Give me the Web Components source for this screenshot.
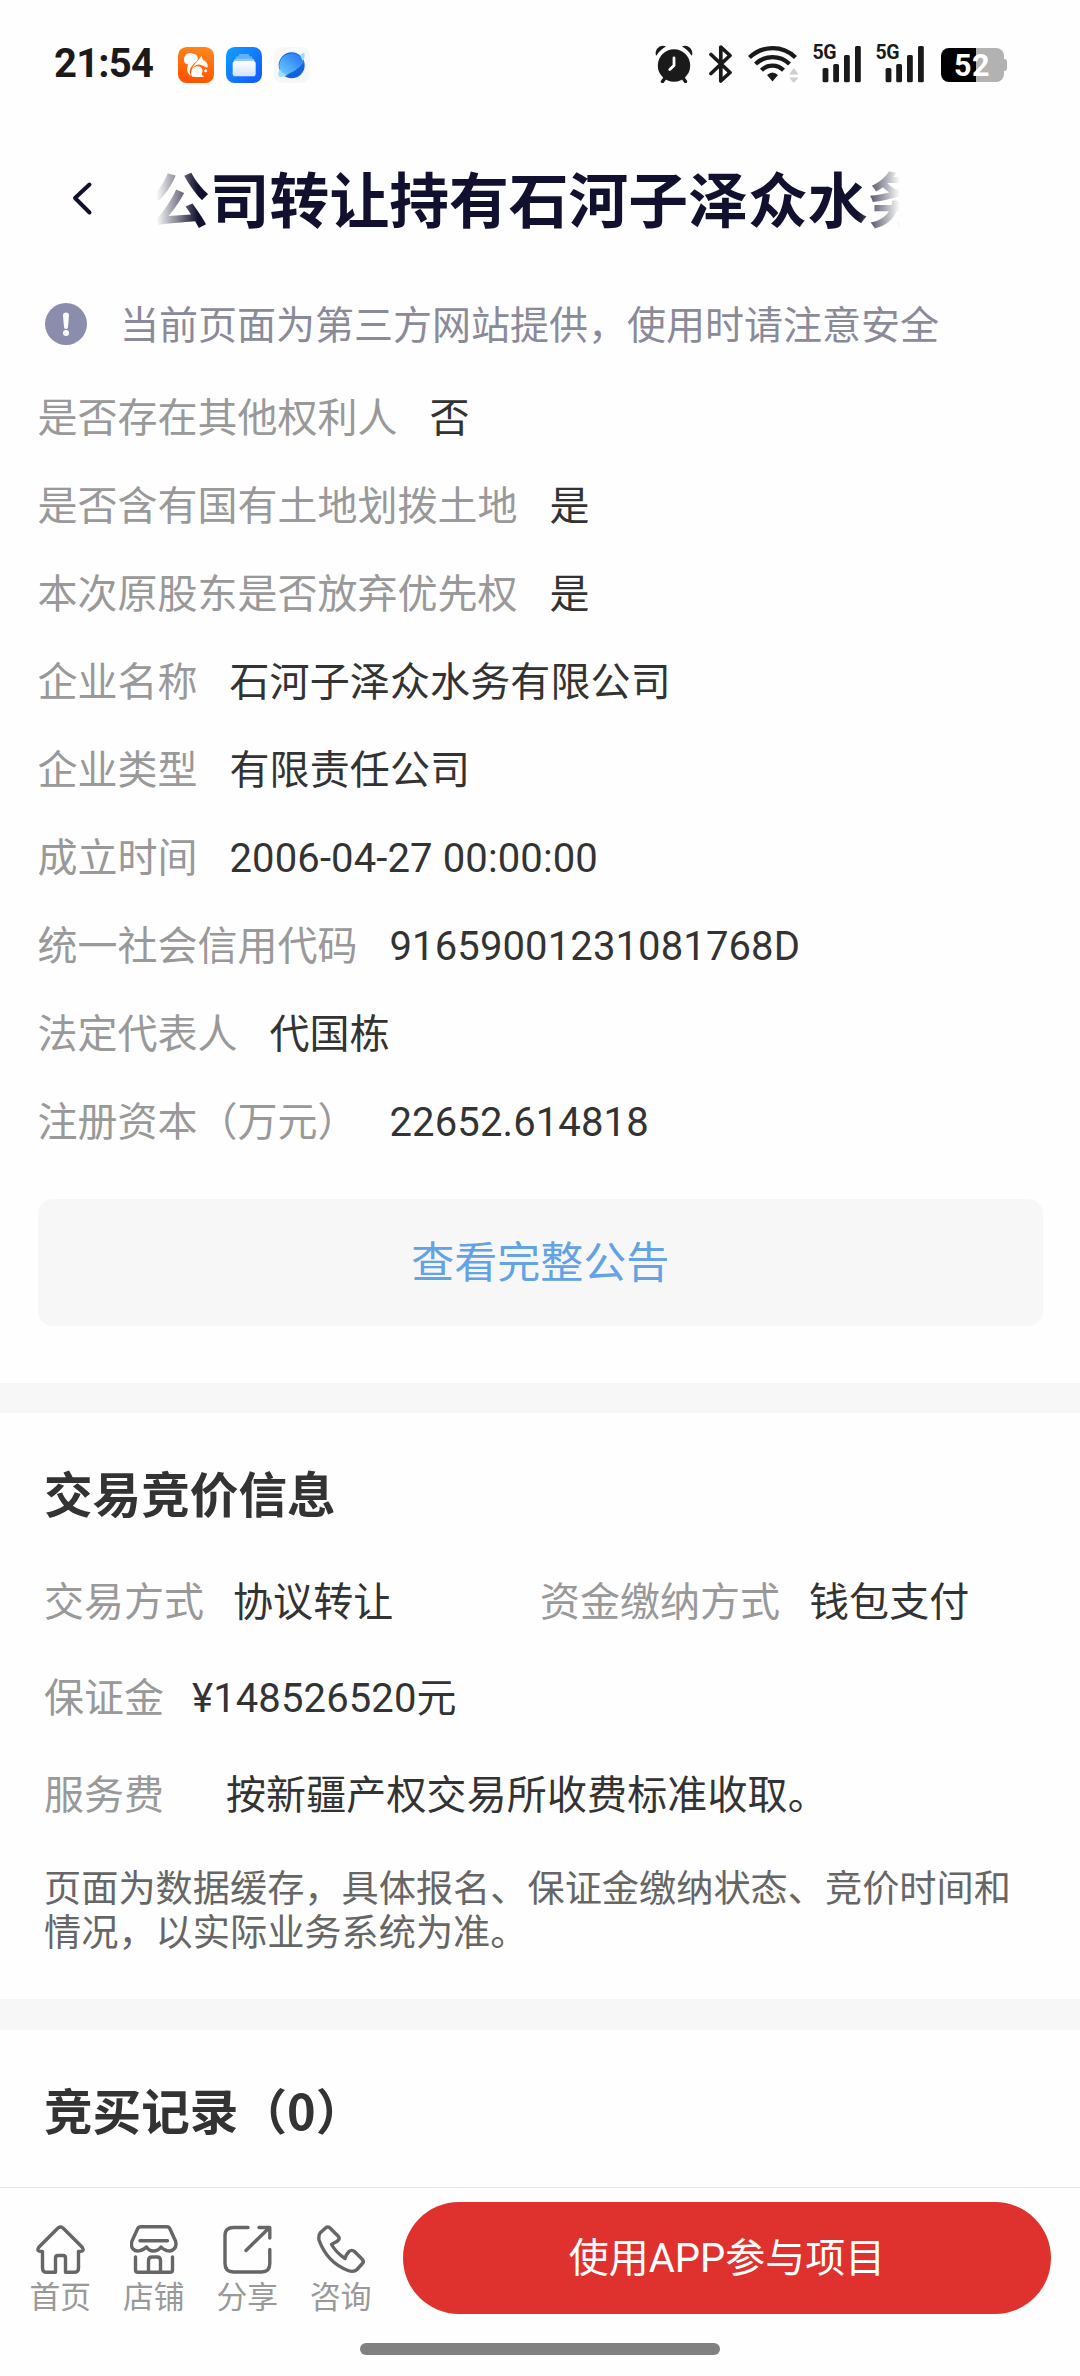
<!DOCTYPE html>
<html lang="zh-CN">
<head>
<meta charset="utf-8"/>
<title>公司转让持有石河子泽众水务</title>
<style>
body {
	margin: 0;
	width: 1080px;
	height: 2376px;
	overflow: hidden;
	display: flex;
	flex-direction: column;
	background: #fefefe;
	color: #333;
	font-family: Roboto, "Noto Sans CJK SC", sans-serif;
	font-size: 40px;
}
</style>
<script>

'use strict';

// every element is a shadow root filled from its own markup
const define = (name, html) => {
	const template = document.createElement('template');
	template.innerHTML = html;
	window.customElements.define(name, class extends HTMLElement {
		constructor() {
			super();
			const shadow = this.attachShadow({mode: 'open'});
			shadow.appendChild(template.content.cloneNode(true));
		}
	});
};

define('signal-bars', `
<style>
:host { display: block; position: relative; width: 48px; height: 38px; }
svg { display: block; }
span { position: absolute; left: 0; top: -3px; font: 700 19.5px/22px Roboto, sans-serif; letter-spacing: -0.4px; color: #1a1a1a; }
</style>
<svg width="48" height="38" fill="#1a1a1a">
	<rect x="9.6" y="23" width="5.8" height="14.3" rx="1.5"/>
	<rect x="20.2" y="19" width="5.8" height="18.3" rx="1.5"/>
	<rect x="31" y="10" width="5.8" height="27.3" rx="1.5"/>
	<rect x="42" y="1" width="5.8" height="36.3" rx="1.5"/>
</svg>
<span>5G</span>
`);

define('battery-level', `
<style>
:host { display: flex; align-items: center; height: 34px; }
.box {
	width: 63px; height: 34px; border-radius: 8px; color: #fff;
	background: linear-gradient(90deg, #000 55.5%, #b2b2b2 55.5%);
	font: 700 30.5px/35px Roboto, sans-serif; text-align: center; letter-spacing: 0.4px;
}
.nub { width: 3px; height: 12px; background: #b2b2b2; border-radius: 0 3px 3px 0; }
</style>
<div class="box"><slot></slot></div>
<div class="nub"></div>
`);

define('status-bar', `
<style>
:host { display: flex; flex: none; box-sizing: border-box; height: 128px; padding: 45px 73.500px 0 54px; }
.time { width: 124px; font: 700 40px/38px Roboto, sans-serif; color: #1a1a1a; letter-spacing: -0.8px; }
.apps { display: flex; gap: 12px; padding-top: 2px; }
.icons { display: flex; margin-left: auto; }
svg { display: block; }
</style>
<div class="time">21:54</div>
<div class="apps">
	<svg width="36" height="36" viewBox="0 0 108 108">
		<linearGradient id="o" x1="1" y1="0" x2="0.8" y2="1"><stop stop-color="#ff8a1f"/><stop offset="1" stop-color="#ff5500"/></linearGradient>
		<rect width="108" height="108" rx="26" fill="url(#o)"/>
		<g fill="#fff">
			<path d="M18 41C16 24 32 14 45 20C58 21 62 32 58 41C46 50 36 60 35 74C36 80 38 84 41 88C24 80 27 62 30 52C26 48 22 54 18 41Z"/>
			<path d="M41 70C42 56 60 44 70 26L75 39C85 42 91 52 89 60C84 64 79 57 71 55C58 49 48 56 41 70Z"/>
			<path d="M40 84C38 70 46 58 58 58C70 58 78 68 71 82C70 85 76 84 77 90H45Q41 88 40 84Z"/>
			<circle cx="83" cy="71" r="4.5"/>
		</g>
	</svg>
	<svg width="36" height="36" viewBox="0 0 108 108">
		<linearGradient id="b" x1="0" y1="0" x2="1" y2="1"><stop stop-color="#0fa0ff"/><stop offset="1" stop-color="#1456fa"/></linearGradient>
		<linearGradient id="w" x1="0" y1="0" x2="0" y2="1"><stop stop-color="#fff"/><stop offset="1" stop-color="#d4e2ff"/></linearGradient>
		<rect width="108" height="108" rx="26" fill="url(#b)"/>
		<rect x="38" y="21" width="32" height="10" rx="4" fill="#5fb2ff"/>
		<rect x="29" y="28" width="50" height="12" rx="4" fill="#5fb2ff"/>
		<rect x="24" y="35" width="61" height="14" rx="5" fill="#8fc8ff"/>
		<rect x="20" y="42" width="69" height="46" rx="8" fill="url(#w)"/>
	</svg>
	<svg width="36" height="36" viewBox="0 0 108 108">
		<linearGradient id="p" x1="0" y1="1" x2="1" y2="0"><stop stop-color="#6fd0ff"/><stop offset="1" stop-color="#1d6cf0"/></linearGradient>
		<rect width="108" height="108" rx="26" fill="#f7f7f8"/>
		<circle cx="53" cy="55" r="39" fill="#1461dd"/>
		<path d="M18 72A39 39 0 0 1 86 35Q90 40 91 45Q60 82 26 84Z" fill="url(#p)"/>
		<path d="M78 24Q90 14 92 20Q94 30 86 42ZM17 66Q8 86 18 90Q26 92 44 82Q26 84 17 66Z" fill="#9bdcff"/>
	</svg>
</div>
<div class="icons">
	<svg width="38" height="38" viewBox="0 0 38 38">
		<g fill="#1a1a1a">
			<circle cx="19" cy="20.5" r="16.2"/>
			<path d="M1 10.5C-1 4 6 -1.500 11 1.500C8 3 4 6 1.500 10.500ZM37 10.500C39 4 32 -1.500 27 1.500C30 3 34 6 36.500 10.500Z"/>
		</g>
		<path d="M10 33L7.500 36.500M28 33L30.500 36.500" stroke="#1a1a1a" stroke-width="3.4" stroke-linecap="round"/>
		<path d="M19 13V20.500L14.800 24.500" fill="none" stroke="#fff" stroke-width="2.8" stroke-linecap="round" stroke-linejoin="round"/>
	</svg>
	<svg style="margin-left:16px" width="24" height="38" viewBox="0 0 24 38" fill="none" stroke="#1a1a1a" stroke-width="3.7" stroke-linecap="round" stroke-linejoin="round">
		<path d="M2 9.500L21 27.500L11.800 36V2L21 10.500L2 28.500"/>
	</svg>
	<svg style="margin-left:15px" width="52" height="38" viewBox="0 0 52 38">
		<g fill="none" stroke="#1a1a1a" stroke-width="4.300">
			<path d="M1.500 12.500A33 33 0 0 1 47.500 12.500"/>
			<path d="M7.500 19A24.500 24.500 0 0 1 41.500 19"/>
			<path d="M13.500 25.300A15.500 15.500 0 0 1 35.500 25.300"/>
		</g>
		<path d="M19 30Q24.500 25 30 30L24.500 36.500Z" fill="#1a1a1a"/>
		<path d="M41 29.500L45.800 23L50.600 29.500ZM41 32.500H50.600L45.800 38Z" fill="#cfcfcf"/>
	</svg>
	<signal-bars style="margin-left:13px"></signal-bars>
	<signal-bars style="margin-left:15px"></signal-bars>
	<battery-level style="margin:3px 0 0 17px">52</battery-level>
</div>
`);

define('title-bar', `
<style>
:host { display: flex; flex: none; align-items: center; height: 144px; padding-left: 70px; color: #11112f; }
svg { flex: none; width: 86px; height: 40px; }
.clip {
	width: 744px; overflow: hidden; white-space: nowrap;
	-webkit-mask-image: linear-gradient(90deg, transparent, #000 42px, #000 702px, transparent);
	mask-image: linear-gradient(90deg, transparent, #000 42px, #000 702px, transparent);
}
.text { margin-left: -6px; font: 700 59.8px/88px "Noto Sans CJK SC", sans-serif; padding-bottom: 6px; }
</style>
<svg viewBox="0 0 86 40" fill="none" stroke="#11112f" stroke-width="4" stroke-linecap="round" stroke-linejoin="round"><path d="M19.500 4.500L5 18L19.500 32.500"/></svg>
<div class="clip"><div class="text"><slot></slot></div></div>
`);

define('site-notice', `
<style>
:host { display: flex; flex: none; align-items: center; height: 102px; padding-left: 45px; font: 39px/60px "Noto Sans CJK SC", sans-serif; color: #8a8a99; }
svg { margin-right: 33px; padding-top: 1px; }
span { padding-bottom: 2px; }
</style>
<svg width="42" height="42"><circle cx="21" cy="21" r="21" fill="#8a8dac"/><path d="M18 12.500a3 3 0 0 1 6 0l-1 11.500a2 2 0 0 1-4 0z" fill="#fff"/><circle cx="21" cy="30" r="3" fill="#fff"/></svg>
<span><slot></slot></span>
`);

define('info-row', `
<style>
:host { display: flex; flex: none; align-items: center; box-sizing: border-box; height: var(--row-height, 87.9px); padding-top: 3px; line-height: 50px; white-space: nowrap; }
.label { color: #999; margin-right: var(--gap, 32px); }
.value { letter-spacing: 0.12px; }
</style>
<span class="label"><slot name="label"></slot></span>
<span class="value"><slot></slot></span>
`);

define('notice-button', `
<style>
:host { display: flex; align-items: center; justify-content: center; box-sizing: border-box; height: 127px; margin-top: 34px; padding-bottom: 8px; border-radius: 15px; background: #f7f7f7; color: #62a2e5; font-size: 43px; }
</style>
<slot></slot>
`);

define('page-section', `
<style>
:host { display: block; flex: none; box-sizing: border-box; }
:host([divided]) { border-top: 30px solid #f7f7f7; }
</style>
<slot></slot>
`);

define('section-title', `
<style>
:host { display: flex; align-items: center; box-sizing: border-box; height: 140px; padding-top: 24px; font: 700 48.6px/70px "Noto Sans CJK SC", sans-serif; }
span { padding-bottom: 7px; }
</style>
<span><slot></slot></span>
`);

define('cache-note', `
<style>
:host { display: block; margin-top: 24.500px; font-size: 37.2px; line-height: 44px; color: #666; white-space: nowrap; }
</style>
<slot></slot>
`);

define('tab-item', `
<style>
:host { display: flex; flex-direction: column; align-items: center; width: 93.5px; padding-top: 37px; color: #999; font-size: 30.8px; line-height: 40px; }
::slotted(svg) { display: block; fill: none; stroke: #666; stroke-width: 3.4px; stroke-linecap: round; stroke-linejoin: round; }
span { margin-top: 4px; }
</style>
<slot name="icon"></slot>
<span><slot></slot></span>
`);

define('bottom-bar', `
<style>
:host { display: flex; flex: none; box-sizing: border-box; height: 156px; margin-top: auto; border-top: 1px solid #e4e4e4; padding-left: 13.5px; }
</style>
<slot></slot>
`);

define('join-button', `
<style>
:host { display: flex; align-items: center; justify-content: center; box-sizing: border-box; width: 648px; height: 112px; margin: 14px 0 0 15.500px; padding-bottom: 6px; border-radius: 56px; background: #df322f; color: #fff; font-size: 40px; }
</style>
<slot></slot>
`);

define('home-indicator', `
<style>
:host { display: block; flex: none; width: 360px; height: 12px; margin: 0 auto 21px; border-radius: 6px; background: #808080; }
</style>
`);
</script>
</head>
<body>
<status-bar></status-bar>
<title-bar>公司转让持有石河子泽众水务</title-bar>
<site-notice>当前页面为第三方网站提供，使用时请注意安全</site-notice>

<page-section style="padding:0 37px 57px 37.5px">
	<info-row><span slot="label">是否存在其他权利人</span>否</info-row>
	<info-row><span slot="label">是否含有国有土地划拨土地</span>是</info-row>
	<info-row><span slot="label">本次原股东是否放弃优先权</span>是</info-row>
	<info-row><span slot="label">企业名称</span>石河子泽众水务有限公司</info-row>
	<info-row><span slot="label">企业类型</span>有限责任公司</info-row>
	<info-row><span slot="label">成立时间</span>2006-04-27 00:00:00</info-row>
	<info-row><span slot="label">统一社会信用代码</span>91659001231081768D</info-row>
	<info-row><span slot="label">法定代表人</span>代国栋</info-row>
	<info-row><span slot="label">注册资本（万元）</span>22652.614818</info-row>
	<notice-button>查看完整公告</notice-button>
</page-section>

<page-section divided style="padding:0 44px 44px;--row-height:96.5px">
	<section-title>交易竞价信息</section-title>
	<div style="display:grid;grid-template-columns:496px 1fr;--gap:29px">
		<info-row><span slot="label">交易方式</span>协议转让</info-row>
		<info-row><span slot="label">资金缴纳方式</span>钱包支付</info-row>
	</div>
	<info-row style="--gap:28px"><span slot="label">保证金</span>¥148526520元</info-row>
	<info-row style="--gap:62px"><span slot="label">服务费</span>按新疆产权交易所收费标准收取。</info-row>
	<cache-note>页面为数据缓存，具体报名、保证金缴纳状态、竞价时间和<br>情况，以实际业务系统为准。</cache-note>
</page-section>

<page-section divided style="padding:0 44px;border-top-width:31px">
	<section-title>竞买记录（0）</section-title>
</page-section>

<bottom-bar>
	<tab-item>
		<svg slot="icon" width="49" height="49"><path d="M22 3Q24.500 1 27 3L46 22Q49 26.500 44 26.500H42.500V43Q42.500 47.300 38 47.300H29.500V33Q29.500 30.500 27 30.500H22Q19.500 30.500 19.500 33V47.300H11Q6.500 47.300 6.500 43V26.500H5Q0 26.500 3 22Z"/></svg>
		首页
	</tab-item>
	<tab-item>
		<svg slot="icon" width="48" height="49"><path d="M11 1.800H37Q39 1.800 40 4L45.500 16Q47 21 44 24Q41 27 36.500 25.500Q33 24.500 31 22Q28 26 23.500 26Q19 26 16.500 22Q14 24.500 10.500 25.500Q6 27 3 24Q0.500 21 2 16L7.500 4Q8.500 1.800 11 1.800ZM10 15.700H37.500M5.500 32V45Q5.500 47.300 8 47.300H40Q42.500 47.300 42.500 45V32M18.500 47V35.500Q18.500 32 22 32H27Q30.500 32 30.500 35.500V47"/></svg>
		店铺
	</tab-item>
	<tab-item>
		<svg slot="icon" width="49" height="49"><path d="M25 2.500H10.500Q2 2.500 2 10.500V38.500Q2 47 10.500 47H38.500Q46.800 47 46.800 38.500V24.500M23 25.500L46 3M36 2.500H46.800V13"/></svg>
		分享
	</tab-item>
	<tab-item>
		<svg slot="icon" width="48" height="49"><path d="M8 3.500C9.500 1.500 12 1.500 13.500 3.500L21 11C22.500 12.500 22.500 14 21 15.500C18.500 18 16.500 17.500 14.500 19.500C18 25.500 22 29.500 28 33.500C29 30 30 28.500 32 26.500C33.500 25 36 25 37.500 26.500L45 34C46.500 35.500 46.500 37.500 45 39L40 44.500C38 46.500 35 47 31 45.500C17 40 7 29 2 15C1.500 11 2 9 3.500 7.500Z"/></svg>
		咨询
	</tab-item>
	<join-button>使用APP参与项目</join-button>
</bottom-bar>
<home-indicator></home-indicator>
</body>
</html>
